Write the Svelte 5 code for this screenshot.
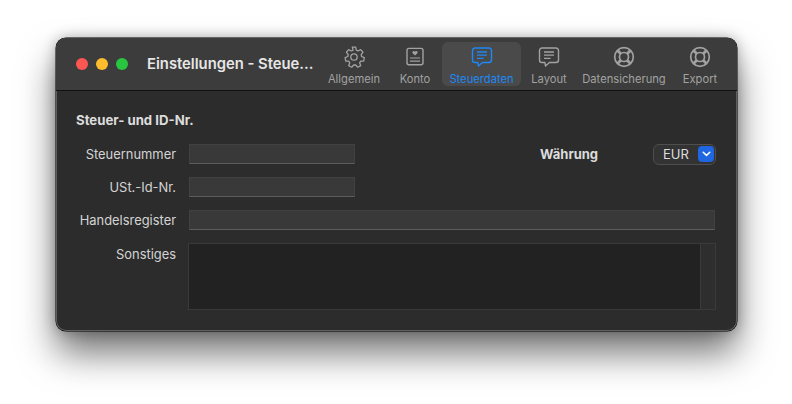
<script>
	const tabs = [
		{ label: 'Allgemein', icon: 'gear' },
		{ label: 'Konto', icon: 'card' },
		{ label: 'Steuerdaten', icon: 'bubble', active: true },
		{ label: 'Layout', icon: 'bubble' },
		{ label: 'Datensicherung', icon: 'ring' },
		{ label: 'Export', icon: 'ring' }
	]
</script>

<div class="page">
	<div class="window">
		<header class="titlebar">
			<div class="lights">
				<span class="light red"></span>
				<span class="light yellow"></span>
				<span class="light green"></span>
			</div>
			<div class="title">Einstellungen - Steue...</div>
			<nav class="tabs">
				{#each tabs as tab}
					<div class="tab" class:active={tab.active}>
						<svg width="26" height="26" viewBox="0 0 24 24" fill="none" stroke="currentColor">
							{#if tab.icon === 'gear'}
								<path stroke-width="1.3" stroke-linejoin="round" d="M10.3 2.2h3.4l.6 3 1.7.8 2.7-1.4 2.3 2.6-1.8 2.4.4 1.9 2.7 1.2-.6 3.3-3 .2-1.1 1.6 1.1 2.8-3 1.6-2-2.2h-2l-2 2.2-3-1.6 1.1-2.8-1.1-1.6-3-.2-.6-3.3 2.7-1.2.4-1.9-1.8-2.4 2.3-2.6 2.7 1.4 1.7-.8z" />
								<circle cx="12" cy="12" r="3.2" stroke-width="1.3" />
							{:else if tab.icon === 'card'}
								<rect x="4" y="3.4" width="16" height="16.4" rx="2" stroke-width="1.4" />
								<path fill="currentColor" stroke="none" d="M9.8 6.4c.8-.7 1.7-.4 2.2.4.5-.8 1.4-1.1 2.2-.4.7.7.4 1.7-.4 2.4L12 10.4l-1.8-1.6c-.8-.7-1.1-1.7-.4-2.4z" />
								<path stroke-width="1.2" d="M7 13h10M7 16.2h10" />
							{:else if tab.icon === 'bubble'}
								<path stroke-width="1.4" stroke-linejoin="round" d="M5 3h14a2.5 2.5 0 0 1 2.5 2.500v9.500a2.5 2.5 0 0 1-2.5 2.500h-6.500l-4 3.500-.6-3.500H5a2.5 2.5 0 0 1-2.500-2.500V5.500A2.5 2.5 0 0 1 5 3z" />
								<path stroke-width="1.3" d="M7 7h10M7 10.2h10M7 13.4h6.500" />
							{:else}
								<circle cx="12" cy="12" r="9.3" stroke-width="1.7" />
								<circle cx="12" cy="12" r="4.5" stroke-width="1.7" />
								<path stroke-width="2.8" d="M5.600 5.600l3.200 3.200M18.400 5.600l-3.200 3.200M5.600 18.400l3.200-3.200M18.400 18.400l-3.200-3.200" />
							{/if}
						</svg>
						<span>{tab.label}</span>
					</div>
				{/each}
			</nav>
		</header>

		<main class="content">
			<h2>Steuer- und ID-Nr.</h2>
			<div class="form">
				<div class="row">
					<span class="label">Steuernummer</span>
					<div class="input short"></div>
					<span class="currency-label">Währung</span>
					<div class="select">
						<span>EUR</span>
						<span class="chevron">
							<svg width="9" height="6" viewBox="0 0 9 6" fill="none" stroke="#fff" stroke-width="1.5" stroke-linecap="round" stroke-linejoin="round"><path d="M1.2 1.3L4.5 4.4 7.8 1.3" /></svg>
						</span>
					</div>
				</div>
				<div class="row">
					<span class="label">USt.-Id-Nr.</span>
					<div class="input short"></div>
				</div>
				<div class="row">
					<span class="label">Handelsregister</span>
					<div class="input wide"></div>
				</div>
				<div class="row area">
					<span class="label">Sonstiges</span>
					<div class="textarea">
						<div class="text"></div>
						<div class="scrollbar"></div>
					</div>
				</div>
			</div>
		</main>
	</div>
</div>

<style>
:global(body) {
	margin: 0;
	background: #fff;
}

.page {
	width: 792px;
	height: 404px;
	box-sizing: border-box;
	padding: 38px 55px 73px 56px;
	font-family: Inter, "Liberation Sans", sans-serif;
	overflow: hidden;
}

.window {
	height: 293px;
	display: flex;
	flex-direction: column;
	background: #2c2c2c;
	border-radius: 10px;
	overflow: hidden;
	box-shadow: 0 0 0 .5px #000, inset 0 0 0 1px #5f5f5f, 0 22px 36px rgba(0, 0, 0, .55), 0 0 14px rgba(0, 0, 0, .3);
}

.titlebar {
	height: 53px;
	flex: none;
	display: flex;
	align-items: center;
	background: #3c3c3c;
	border-bottom: 1px solid #111;
	box-sizing: border-box;
	padding: 0 11px 0 20px;
}

.lights {
	display: flex;
	gap: 8px;
}

.light {
	width: 12px;
	height: 12px;
	border-radius: 50%;
}

.red { background: #fc5753; }
.yellow { background: #fdbc2e; }
.green { background: #28c73f; }

.title {
	margin-left: 19px;
	margin-bottom: 1px;
	color: #e6e6e6;
	font-size: 14.8px;
	font-weight: 600;
	white-space: nowrap;
}

.tabs {
	margin-left: auto;
	display: grid;
	grid-template-columns: 68px 48px 79px 50px 94px 52px;
	gap: 3px;
}

.tab {
	height: 44px;
	box-sizing: border-box;
	padding-top: 3px;
	display: flex;
	flex-direction: column;
	align-items: center;
	color: #a2a2a2;
	font-size: 11.2px;
	line-height: 14px;
	border-radius: 6px;
	white-space: nowrap;
}

.tab svg {
	display: block;
	margin-bottom: 3px;
}

.tab.active {
	background: #4a4a4a;
	color: #1e88f5;
}

.content {
	flex: 1;
	padding: 21px 22px 0 20px;
}

h2 {
	margin: 0 0 16px;
	color: #dcdcdc;
	font-size: 13.2px;
	line-height: 16px;
	font-weight: 700;
}

.form {
	display: flex;
	flex-direction: column;
	gap: 13px;
}

.row {
	display: flex;
	align-items: center;
	height: 20px;
}

.row.area {
	align-items: flex-start;
	height: 67px;
}

.label {
	width: 100px;
	margin-right: 13px;
	flex: none;
	text-align: right;
	color: #d4d4d4;
	font-size: 12.9px;
	line-height: 21px;
	white-space: nowrap;
}

.area .label {
	line-height: 23px;
}

.input {
	height: 20px;
	box-sizing: border-box;
	background: #393939;
	border: 1px solid #414141;
	border-bottom-color: #5c5c5c;
}

.short {
	width: 166px;
}

.wide {
	flex: 1;
}

.currency-label {
	margin-left: 185px;
	color: #dcdcdc;
	font-size: 13px;
	font-weight: 700;
}

.select {
	margin-left: auto;
	margin-right: -1px;
	width: 63px;
	height: 21px;
	box-sizing: border-box;
	border: 1px solid #4e4e4e;
	border-radius: 6px;
	background: #333;
	display: flex;
	align-items: center;
	justify-content: space-between;
	padding-left: 9px;
	color: #dedede;
	font-size: 13px;
}

.chevron {
	width: 16px;
	height: 16px;
	margin-right: 1px;
	border-radius: 4px;
	background: #1f66e0;
	display: flex;
	align-items: center;
	justify-content: center;
}

.textarea {
	flex: 1;
	height: 67px;
	margin: 0 -1px;
	display: flex;
	box-sizing: border-box;
	border: 1px solid #3a3a3a;
}

.text {
	flex: 1;
	background: #222;
}

.scrollbar {
	width: 14px;
	background: #2e2e2e;
	border-left: 1px solid #3a3a3a;
}
</style>
